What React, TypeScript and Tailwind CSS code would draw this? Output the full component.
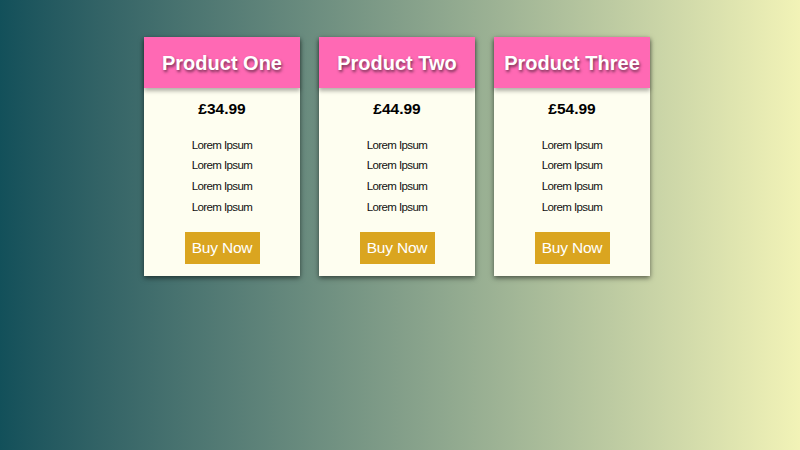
import React from "react";

const products = [
  { name: "Product One", price: "£34.99" },
  { name: "Product Two", price: "£44.99" },
  { name: "Product Three", price: "£54.99" },
];

export default function App() {
  return (
    <div
      className="w-[800px] h-[450px] bg-gradient-to-r from-[#12505a] to-[#f2f3b7] flex justify-center items-start gap-[19px] pt-[37px] pr-[6px]"
      style={{ fontFamily: '"Liberation Sans", Arial, sans-serif' }}
    >
      {products.map((p) => (
        <div
          key={p.name}
          className="w-[156px] h-[239px] bg-[#fefef0] flex flex-col items-center shadow-[0_2px_5px_rgba(0,0,0,0.55)]"
        >
          <div className="w-full h-[51px] bg-[#ff69b4] flex items-center justify-center shadow-[0_3px_4px_rgba(0,0,0,0.3)]">
            <span className="text-white font-bold text-[20px] whitespace-nowrap [text-shadow:1px_2px_3px_rgba(0,0,0,0.55)]">
              {p.name}
            </span>
          </div>
          <div className="mt-[11px] h-[20px] flex items-center text-[15.5px] font-bold text-black">
            {p.price}
          </div>
          <div className="mt-[16px] flex flex-col items-center text-[11.5px] tracking-[-0.6px] text-[#111]">
            {[0, 1, 2, 3].map((i) => (
              <div key={i} className="h-[20.7px] flex items-center">
                Lorem Ipsum
              </div>
            ))}
          </div>
          <div className="mt-[14px] w-[75px] h-[32px] bg-[#daa520] flex items-center justify-center text-white text-[15.5px] tracking-[-0.2px]">
            Buy Now
          </div>
        </div>
      ))}
    </div>
  );
}
